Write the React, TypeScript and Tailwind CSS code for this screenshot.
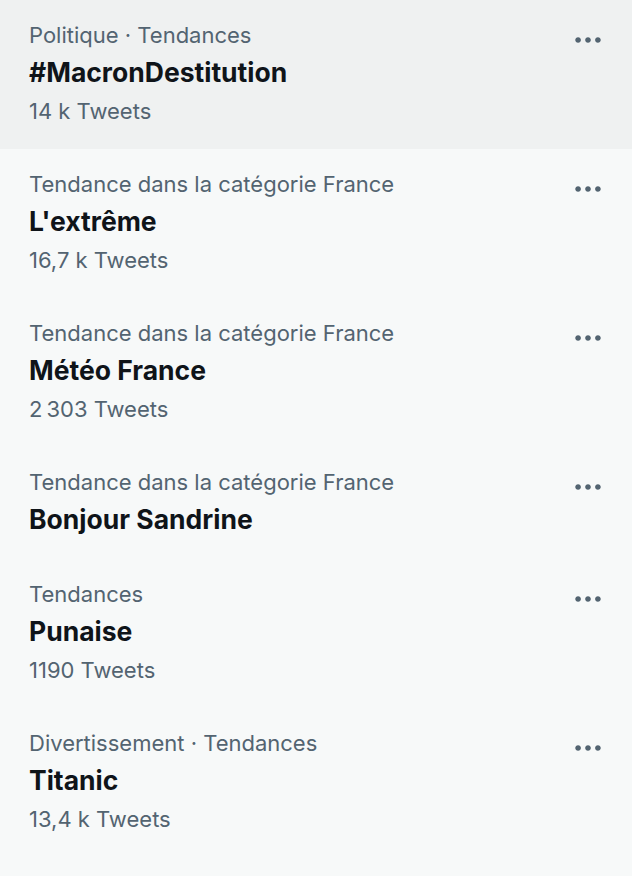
import { useState } from 'react';

type Trend = {
  context: string;
  name: string;
  count?: string;
};

const trends: Trend[] = [
  { context: 'Politique · Tendances', name: '#MacronDestitution', count: '14 k Tweets' },
  { context: 'Tendance dans la catégorie France', name: "L'extrême", count: '16,7 k Tweets' },
  { context: 'Tendance dans la catégorie France', name: 'Météo France', count: '2\u202f303 Tweets' },
  { context: 'Tendance dans la catégorie France', name: 'Bonjour Sandrine' },
  { context: 'Tendances', name: 'Punaise', count: '1190 Tweets' },
  { context: 'Divertissement · Tendances', name: 'Titanic', count: '13,4 k Tweets' },
];

function MoreIcon() {
  return (
    <svg viewBox="0 0 24 24" className="w-[34px] h-[34px] fill-[#536471]">
      <path d="M3 12c0-1.1.9-2 2-2s2 .9 2 2-.9 2-2 2-2-.9-2-2zm9 2c1.1 0 2-.9 2-2s-.9-2-2-2-2 .9-2 2 .9 2 2 2zm7 0c1.1 0 2-.9 2-2s-.9-2-2-2-2 .9-2 2 .9 2 2 2z" />
    </svg>
  );
}

export default function App() {
  const [hovered, setHovered] = useState(0);

  return (
    <div
      className="w-[632px] h-[876px] bg-[#f7f9f9] overflow-hidden"
      style={{ fontFamily: 'Inter, "Noto Sans", sans-serif' }}
    >
      {trends.map((trend, i) => (
        <div
          key={i}
          onMouseEnter={() => setHovered(i)}
          className={`flex justify-between pl-[29px] pr-[27px] pt-[20px] pb-[19px] cursor-pointer ${
            hovered === i ? 'bg-[#eff1f1]' : ''
          }`}
        >
          <div className="flex flex-col">
            <span className="text-[22px] leading-[31px] text-[#536471]">{trend.context}</span>
            <span className="text-[26.5px] leading-[42px] font-bold text-[#0f1419]">{trend.name}</span>
            {trend.count && (
              <span className="text-[22px] leading-[37px] text-[#536471]">{trend.count}</span>
            )}
          </div>
          <div className="pt-[3px]">
            <MoreIcon />
          </div>
        </div>
      ))}
    </div>
  );
}
